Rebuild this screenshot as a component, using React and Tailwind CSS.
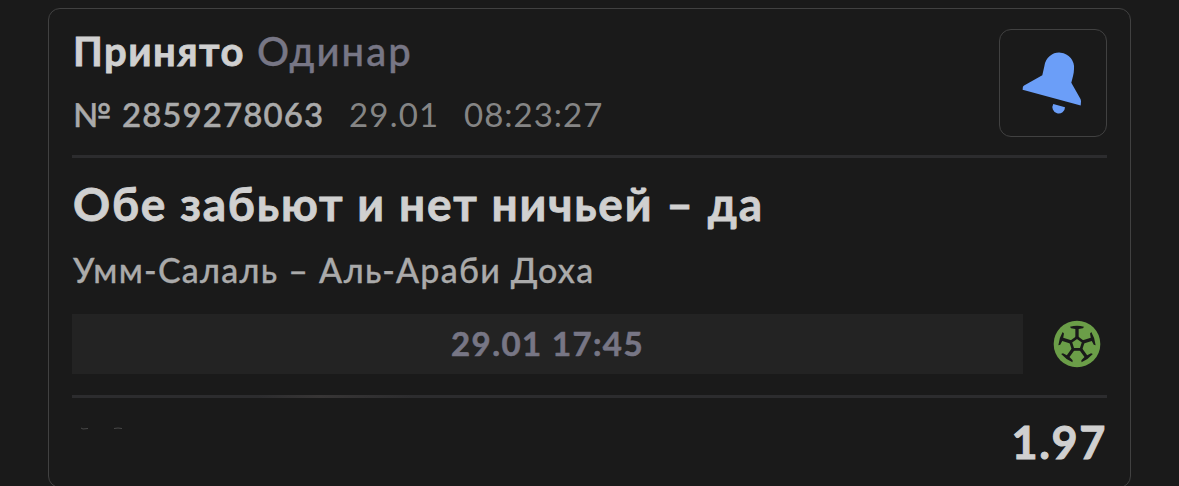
import React from 'react';

const bet = {
  status: 'Принято',
  type: 'Одинар',
  number: '№ 2859278063',
  date: '29.01',
  time: '08:23:27',
  outcome: 'Обе забьют и нет ничьей – да',
  match: 'Умм-Салаль – Аль-Араби Доха',
  start: '29.01 17:45',
  odds: '1.97',
};

const BellIcon = () => (
  <svg className="w-full h-full" viewBox="1 1 106 106" fill="#6b9ef8">
    <path d="M43.3 46.2 L45.4 37 A14.8 14.8 0 0 1 75 40 C75 44.500 73.500 49 72.300 53.800 L81.500 70 Q82 71 82 72.500 L81.700 76.400 L23.600 60.800 L23.900 58.100 Q24.100 57.100 25.100 56.500 Z" />
    <path d="M54.300 75 L66 78.200 A6.300 6.300 0 1 1 54.300 75 Z" />
  </svg>
);

const BallIcon = () => (
  <svg className="w-12 h-12" viewBox="-72 -72 144 144">
    <circle r="70" fill="#6b9e48" />
    <path d="M0 -20 L19 -6.200 L11.700 16.200 L-11.700 16.200 L-19 -6.200 Z" fill="none" stroke="#1a1a1a" strokeWidth="8" />
    {[0, 72, 144, 216, 288].map((angle) => (
      <path
        key={angle}
        transform={`rotate(${angle})`}
        d="M-21 -52 Q0 -57 21 -52 L18 -47 L5 -45 L5 -20 L-5 -20 L-5 -45 L-18 -47 Z"
        fill="#1a1a1a"
      />
    ))}
  </svg>
);

const App = () => {
  return (
    <div className="h-[486px] w-[1179px] overflow-hidden bg-[#1a1a1a] pt-2 pl-12 font-['Lato','Noto_Sans',sans-serif] whitespace-nowrap">
      <div className="h-[480px] w-[1083px] rounded-xl border border-[#414141] px-[23px] pt-5">
        {/* Header */}
        <div className="flex h-[126px] justify-between">
          <div className="pl-[1px]">
            <div className="-mt-[1px] flex h-[46px] items-center text-[40px] leading-[46px]">
              <span className="w-[184px] font-bold tracking-[1.5px] text-[#d0d0d0] [-webkit-text-stroke:0.8px_#d0d0d0]">{bet.status}</span>
              <span className="font-medium tracking-[2.1px] text-[#777685] [-webkit-text-stroke:0.4px_#777685]">{bet.type}</span>
            </div>
            <div className="mt-5 flex h-10 items-center text-[33px] leading-10">
              <span className="w-[276px] font-medium tracking-[1.1px] text-[#aaaaaa] [-webkit-text-stroke:0.5px_#aaaaaa]">{bet.number}</span>
              <span className="w-[115px] tracking-[1.2px] text-[#858585]">{bet.date}</span>
              <span className="tracking-[1px] text-[#858585]">{bet.time}</span>
            </div>
          </div>
          <button className="h-[108px] w-[108px] rounded-xl border border-[#414141]">
            <BellIcon />
          </button>
        </div>
        <div className="h-[3px] bg-[#2c2c2e]" />

        {/* Event */}
        <div className="h-[237px] pl-[1px]">
          <h1 className="pt-[18px] text-[46px] leading-[56px] font-bold tracking-[1.8px] text-[#d0d0d0] [-webkit-text-stroke:0.8px_#d0d0d0]">{bet.outcome}</h1>
          <p className="mt-[18px] text-[34px] leading-10 font-medium tracking-[1.25px] text-[#aaaaaa] [-webkit-text-stroke:0.3px_#aaaaaa]">{bet.match}</p>
          <div className="mt-6 -ml-[1px] flex items-center gap-[30px]">
            <div className="flex h-[60px] w-[951px] items-center justify-center bg-[#232323] text-[33px] font-bold tracking-[1.4px] text-[#777685] [-webkit-text-stroke:0.6px_#777685]">
              {bet.start}
            </div>
            <BallIcon />
          </div>
        </div>
        <div className="h-[3px] bg-linear-to-r from-[#2c2c2e] from-18% via-[#373535] via-24% to-[#2c2c2e] to-33%" />

        {/* Odds */}
        <div className="flex items-start justify-between pt-4">
          <svg className="mt-3 ml-2 h-1.5 w-[46px]" viewBox="0 0 46 6" stroke="#484848" fill="none">
            <path d="M1 2 L3 3 L8 2.500 M34 2.500 L38 2 L42 2.500" />
          </svg>
          <span className="text-[45px] leading-[56px] font-bold tracking-[1.6px] text-[#d0d0d0] [-webkit-text-stroke:1px_#d0d0d0]">{bet.odds}</span>
        </div>
      </div>
    </div>
  );
};

export default App;
